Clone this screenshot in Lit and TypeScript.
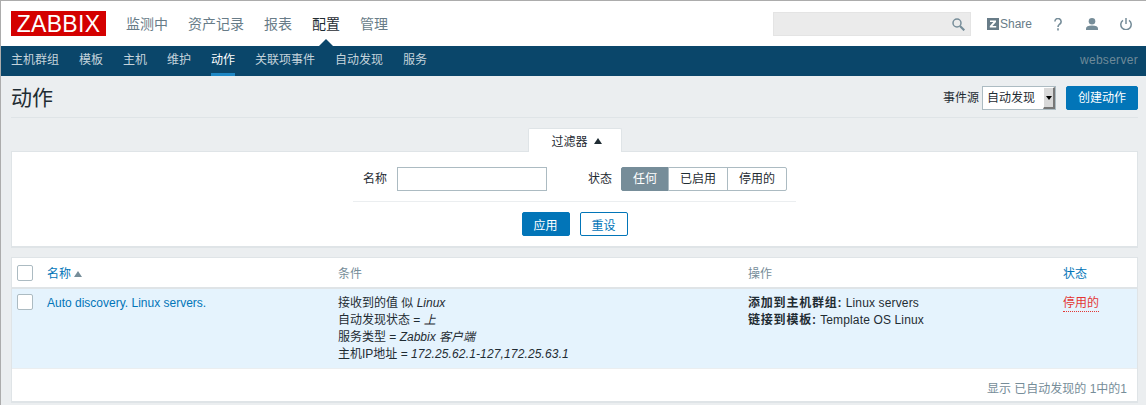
import { LitElement, html, css } from "lit";
import { customElement } from "lit/decorators.js";

@customElement("app-root")
export class AppRoot extends LitElement {
  static styles = css`
    :host { display: block; width: 1146px; height: 405px; overflow: hidden; box-sizing: border-box;
      border-top: 1px solid #acacac; border-left: 1px solid #acacac; background: #ebeef0;
      font: 12px "Liberation Sans", "Noto Sans CJK SC", sans-serif; color: #1f2c33; }
    a { text-decoration: none; color: inherit; }
    .top { height: 45px; background: #fff; display: flex; align-items: center; padding: 0 3px 0 10px; }
    .logo { width: 95px; height: 25px; background: #d40000; color: #fff; font-size: 23px; line-height: 26px; text-align: center; letter-spacing: .3px; overflow: hidden; }
    .main { display: flex; gap: 20px; margin-left: 20px; font-size: 14px; color: #687c88; flex: 1; margin-top: -1px; }
    .main .on { color: #1f2c33; }
    .search { width: 198px; height: 24px; box-sizing: border-box; background: #ebebeb; border: 1px solid #e4e4e4; display: flex; align-items: center; justify-content: flex-end; padding-right: 5px; margin-top: 1px; }
    .share { display: flex; align-items: center; margin-left: 16px; color: #687c88; font-size: 12px; gap: 1px; width: 54px; margin-top: 1px; }
    .ico { display: flex; width: 34px; justify-content: center; margin-top: 1px; }
    .sub { height: 30px; background: #0a466a; display: flex; align-items: stretch; padding: 0 8px 0 10px; color: #c5d4dc; position: relative; }
    .sub a { margin-right: 20px; line-height: 29px; height: 30px; box-sizing: border-box; }
    .sub a.on { color: #fff; border-bottom: 3px solid #1e87c4; }
    .sub .host { margin: 0 0 0 auto; color: #6e8a99; letter-spacing: .3px; }
    .notch { position: absolute; left: 318px; top: -7px; width: 0; height: 0; border: 7.5px solid transparent; border-top: 0; border-bottom-color: #0a466a; }
    .head { display: flex; align-items: flex-start; height: 31px; padding-top: 10px; margin: 0 8px 0 10px; border-bottom: 1px solid #dfe4e7; line-height: 24px; }
    h1 { font-size: 21px; font-weight: 400; margin: 0; flex: 1; line-height: 24px; }
    .head label { margin-right: 3px; }
    .sel { width: 74px; height: 24px; box-sizing: border-box; background: #fff; border: 1px solid #acbbc2; display: flex; align-items: center; justify-content: space-between; padding-left: 4px; }
    .arrow { width: 12px; height: 22px; background: #d9d9d9; border-left: 1px solid #fff; border-top: 1px solid #fff; border-right: 2px solid #777; border-bottom: 2px solid #777; box-sizing: border-box; display: flex; align-items: center; justify-content: center; }
    .arrow i { border: 3px solid transparent; border-top: 4px solid #000; border-bottom: 0; }
    .btn { height: 24px; box-sizing: border-box; border-radius: 2px; background: #0275b8; color: #fff; border: 1px solid #0275b8; display: flex; align-items: center; justify-content: center; }
    .create { width: 72px; margin-left: 10px; }
    .tabwrap { display: flex; justify-content: center; height: 23px; margin: 10px 8px 0 10px; }
    .tab { width: 94px; height: 24px; background: #fff; border: 1px solid #dfe4e7; border-bottom: 0; box-sizing: border-box; display: flex; align-items: center; justify-content: center; gap: 6px; padding-left: 4px; border-radius: 2px 2px 0 0; position: relative; z-index: 1; }
    .up { border: 4px solid transparent; border-top: 0; border-bottom: 6px solid #1f2c33; }
    .filter { margin: 0 8px 0 10px; height: 97px; box-sizing: border-box; background: #fff; border: 1px solid #dfe4e7; border-bottom-width: 2px; display: flex; flex-direction: column; align-items: center; }
    .row { display: flex; align-items: flex-start; width: 443px; height: 50px; box-sizing: border-box; padding: 15px 0 0 10px; border-bottom: 1px solid #ebeef0; line-height: 24px; }
    .row input { width: 150px; height: 24px; box-sizing: border-box; border: 1px solid #acbbc2; margin: 0 0 0 10px; padding: 0; background: #fff; }
    .row .st { margin-left: 41px; margin-right: 9px; }
    .seg { display: flex; height: 24px; }
    .seg span { box-sizing: border-box; height: 24px; display: flex; align-items: center; justify-content: center; border: 1px solid #acbbc2; margin-left: -1px; }
    .seg .a { width: 48px; background: #768d99; color: #fff; border-color: #768d99; border-radius: 2px 0 0 2px; margin-left: 0; }
    .seg .b { width: 60px; }
    .seg .c { width: 60px; border-radius: 0 2px 2px 0; }
    .acts { display: flex; gap: 10px; margin-top: 10px; }
    .acts .btn { width: 48px; }
    .ghost { background: #fff; color: #0275b8; }
    .tbl { margin: 9px 8px 0 10px; height: 146px; box-sizing: border-box; background: #fff; border: 1px solid #dfe4e7; border-bottom-width: 2px; }
    .gr { display: grid; grid-template-columns: 35px 291px 410px 315px 1fr; }
    .thead { height: 29px; border-bottom: 2px solid #dfe4e7; align-items: center; color: #768d99; }
    .cb { width: 16px; height: 16px; box-sizing: border-box; border: 1px solid #acbbc2; background: #fff; border-radius: 2px; margin-left: 5px; display: block; }
    .blue { color: #0275b8; }
    .sort { display: inline-block; border: 4px solid transparent; border-top: 0; border-bottom: 6px solid #768d99; margin-left: 3px; vertical-align: 1px; }
    .tr { height: 74px; padding-top: 5px; background: #e5f3fd; border-bottom: 1px solid #ebeef0; line-height: 17px; }
    .tr > div, .tr > a { padding-top: 1px; }
    b { letter-spacing: .8px; }
    .l { letter-spacing: .14px; }
    .dis { color: #e33734; border-bottom: 1px dotted #e33734; line-height: 15px; display: inline-block; }
    .foot { text-align: right; color: #768d99; padding: 10px 10px 0 0; }
  `;

  render() {
    return html`
      <div class="top">
        <div class="logo">ZABBIX</div>
        <nav class="main">
          <a>监测中</a><a>资产记录</a><a>报表</a><a class="on">配置</a><a>管理</a>
        </nav>
        <div class="search">
          <svg width="13" height="13" viewBox="0 0 13 13" fill="none" stroke="#768d99" stroke-width="1.5"><circle cx="5" cy="5" r="4"/><path d="M8 8l4.3 4.3" stroke-width="2.2"/></svg>
        </div>
        <div class="share">
          <svg width="12" height="12" viewBox="0 0 12 12"><rect width="12" height="12" fill="#687c88"/><path d="M3 2.5h6v1.4L5.4 8h3.8v1.5H2.8V8.1L6.4 4H3z" fill="#fff"/></svg>
          <span>Share</span>
        </div>
        <div class="ico">
          <svg width="8" height="13" viewBox="0 0 8 13" fill="none" stroke="#768d99" stroke-width="1.6"><path d="M.9 3.6a3.1 3.1 0 1 1 5 2.4C4.800 6.900 4 7.400 4 9"/><path d="M4 10.300V12.500"/></svg>
        </div>
        <div class="ico">
          <svg width="12" height="12" viewBox="0 0 12 12" fill="#768d99"><circle cx="6" cy="3.300" r="3.300"/><path d="M0 12V10.500C0 8.500 2 7.400 6 7.400s6 1.100 6 3.100V12z"/></svg>
        </div>
        <div class="ico">
          <svg width="12" height="12" viewBox="0 0 12 12" fill="none" stroke="#768d99" stroke-width="1.500"><path d="M3 2.300a5.200 5.200 0 1 0 6 0"/><path d="M6 0v6"/></svg>
        </div>
      </div>
      <nav class="sub">
        <i class="notch"></i>
        <a>主机群组</a><a>模板</a><a>主机</a><a>维护</a><a class="on">动作</a><a>关联项事件</a><a>自动发现</a><a>服务</a>
        <a class="host">webserver</a>
      </nav>
      <div class="head">
        <h1>动作</h1>
        <label>事件源</label>
        <div class="sel">自动发现<span class="arrow"><i></i></span></div>
        <a class="btn create">创建动作</a>
      </div>
      <div class="tabwrap"><div class="tab">过滤器 <i class="up"></i></div></div>
      <section class="filter">
        <div class="row">
          <span>名称</span><input />
          <span class="st">状态</span>
          <div class="seg"><span class="a">任何</span><span class="b">已启用</span><span class="c">停用的</span></div>
        </div>
        <div class="acts"><a class="btn">应用</a><a class="btn ghost">重设</a></div>
      </section>
      <section class="tbl">
        <div class="gr thead">
          <span class="cb"></span>
          <span class="blue">名称<i class="sort"></i></span>
          <span>条件</span>
          <span>操作</span>
          <span class="blue">状态</span>
        </div>
        <div class="gr tr">
          <span class="cb"></span>
          <a class="blue">Auto discovery. Linux servers.</a>
          <div>
            <div>接收到的值 似 <em>Linux</em></div>
            <div>自动发现状态 = <em>上</em></div>
            <div>服务类型 = <em>Zabbix 客户端</em></div>
            <div>主机IP地址 = <em class="l">172.25.62.1-127,172.25.63.1</em></div>
          </div>
          <div>
            <div><b>添加到主机群组:</b> <span class="l">Linux servers</span></div>
            <div><b>链接到模板:</b> <span class="l">Template OS Linux</span></div>
          </div>
          <div><a class="dis">停用的</a></div>
        </div>
        <div class="foot">显示 已自动发现的 1中的1</div>
      </section>
    `;
  }
}
